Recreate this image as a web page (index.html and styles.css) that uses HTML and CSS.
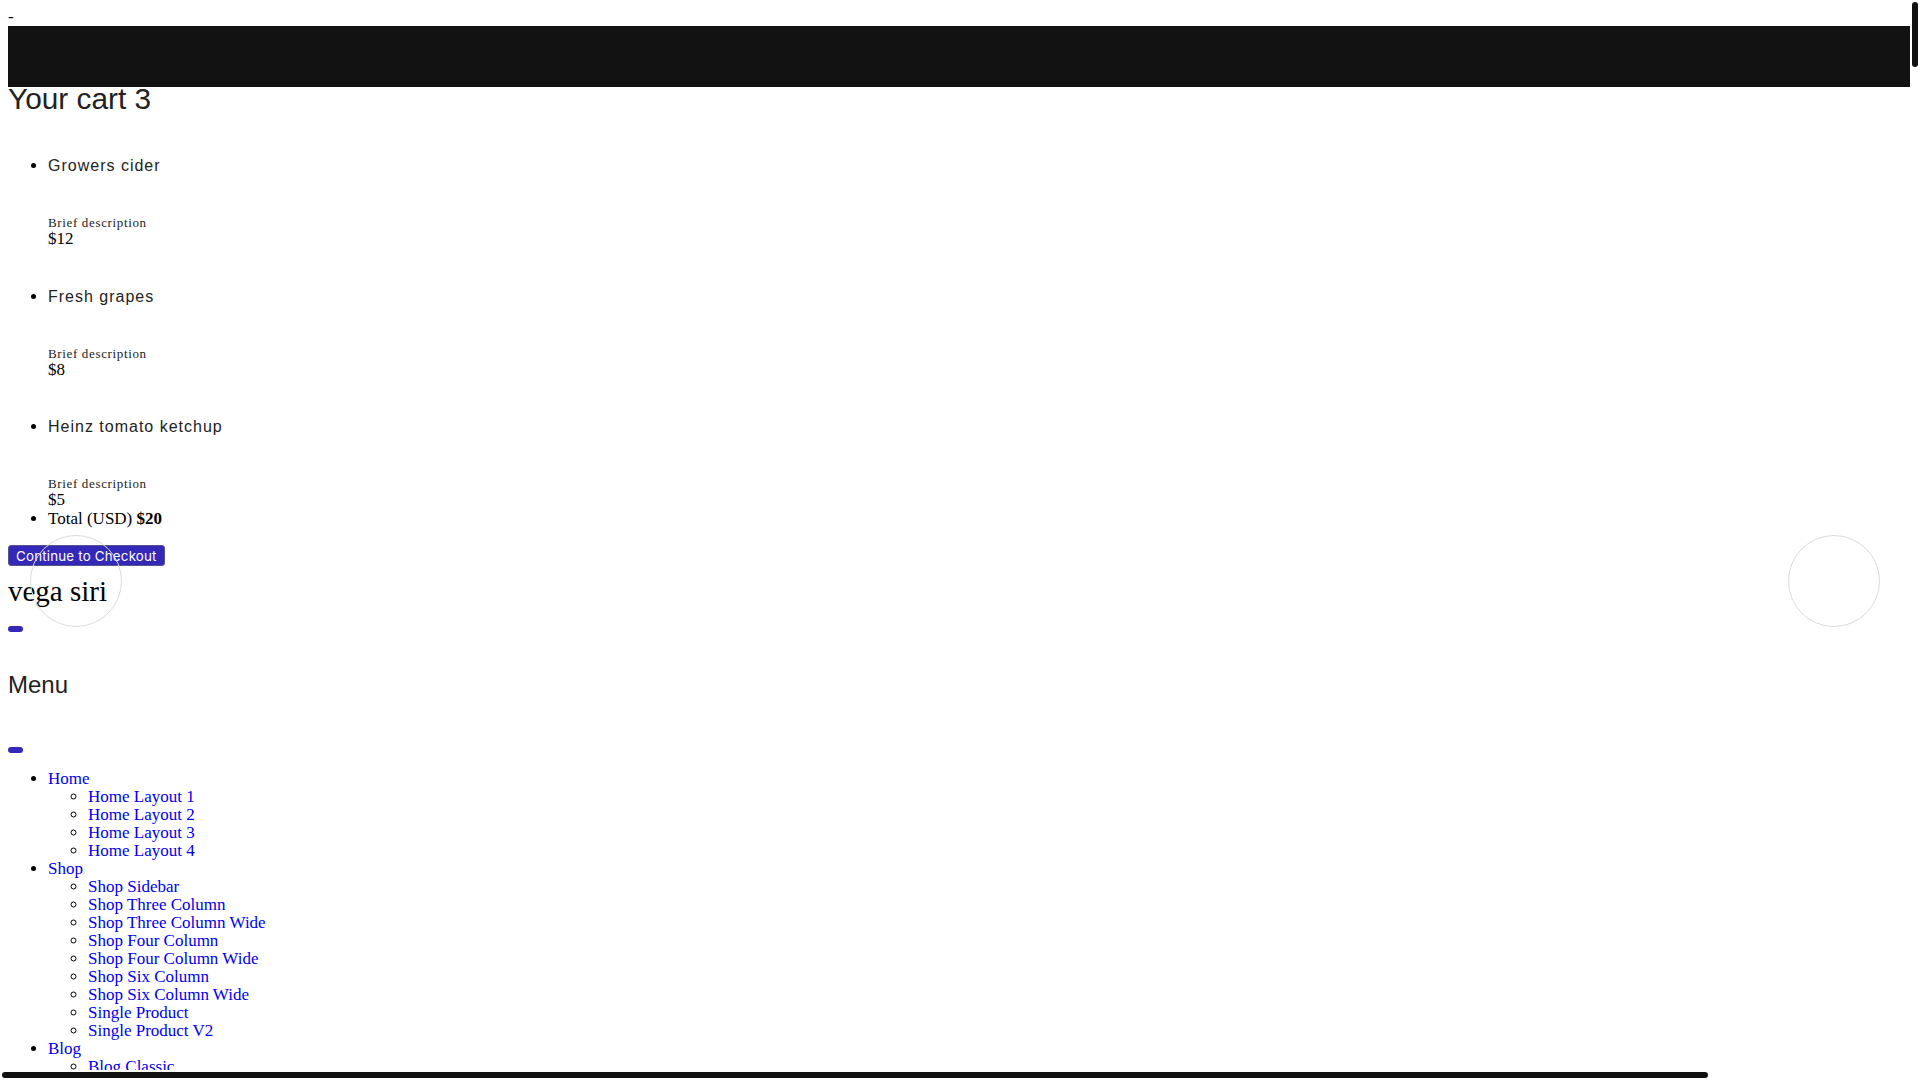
FILE: index.html
```html
<!DOCTYPE html>
<html lang="en">
<head>
<meta charset="utf-8">
<title>vega siri</title>
<link rel="stylesheet" href="styles.css">
</head>
<body>
<div class="page">
  <div class="skip">-</div>
  <div class="topbar"></div>

  <section class="cart">
    <h2 class="cart-title">Your cart 3</h2>
    <ul class="cart-list">
      <li class="cart-item">
        <h4 class="item-name">Growers cider</h4>
        <small class="item-desc">Brief description</small>
        <span class="item-price">$12</span>
      </li>
      <li class="cart-item">
        <h4 class="item-name">Fresh grapes</h4>
        <small class="item-desc">Brief description</small>
        <span class="item-price">$8</span>
      </li>
      <li class="cart-item">
        <h4 class="item-name">Heinz tomato ketchup</h4>
        <small class="item-desc">Brief description</small>
        <span class="item-price">$5</span>
      </li>
      <li class="cart-total">Total (USD) <strong>$20</strong></li>
    </ul>
    <button class="btn-checkout" type="button">Continue to Checkout</button>
  </section>

  <header class="site-header">
    <div class="brand">vega siri</div>
    <button class="pill" type="button" aria-label="Open menu"></button>
    <h3 class="menu-title">Menu</h3>
    <button class="pill pill-close" type="button" aria-label="Close menu"></button>
    <ul class="nav">
      <li><a href="#">Home</a>
        <ul>
          <li><a href="#">Home Layout 1</a></li>
          <li><a href="#">Home Layout 2</a></li>
          <li><a href="#">Home Layout 3</a></li>
          <li><a href="#">Home Layout 4</a></li>
        </ul>
      </li>
      <li><a href="#">Shop</a>
        <ul>
          <li><a href="#">Shop Sidebar</a></li>
          <li><a href="#">Shop Three Column</a></li>
          <li><a href="#">Shop Three Column Wide</a></li>
          <li><a href="#">Shop Four Column</a></li>
          <li><a href="#">Shop Four Column Wide</a></li>
          <li><a href="#">Shop Six Column</a></li>
          <li><a href="#">Shop Six Column Wide</a></li>
          <li><a href="#">Single Product</a></li>
          <li><a href="#">Single Product V2</a></li>
        </ul>
      </li>
      <li><a href="#">Blog</a>
        <ul>
          <li><a href="#">Blog Classic</a></li>
          <li><a href="#">Blog Grid</a></li>
          <li><a href="#">Blog Sidebar</a></li>
          <li><a href="#">Single Post</a></li>
        </ul>
      </li>
      <li><a href="#">Pages</a>
        <ul>
          <li><a href="#">About Us</a></li>
          <li><a href="#">Contact</a></li>
          <li><a href="#">FAQ</a></li>
          <li><a href="#">404</a></li>
        </ul>
      </li>
    </ul>
  </header>

  <button class="circle circle-left" type="button" aria-label="Previous"></button>
  <button class="circle circle-right" type="button" aria-label="Next"></button>
</div>

<div class="scroll-track scroll-track-v" aria-hidden="true"><div class="scroll-thumb thumb-v"></div></div>
<div class="scroll-track scroll-track-h" aria-hidden="true"><div class="scroll-thumb thumb-h"></div></div>
</body>
</html>
```

FILE: styles.css
```css
html {
  background: #fff;
}

body {
  margin: 0;
  font-family: "Liberation Serif", "Times New Roman", serif;
  font-size: 17px;
  color: #000;
}

.page {
  position: relative;
  margin-right: 10px;
  padding: 8px;
}

.skip {
  line-height: 18px;
}

.topbar {
  height: 61px;
  margin-right: -8px;
  background: #121212;
}

/* cart */
.cart-title {
  margin: 0;
  font-family: "Liberation Sans", Arial, sans-serif;
  font-weight: 400;
  font-size: 29.8px;
  line-height: 23px;
  color: #222;
}

.cart-list {
  margin: 46px 0 17px;
  padding-left: 40px;
}

.cart-item + .cart-item {
  margin-top: 38.5px;
}

.item-name {
  margin: 1px 0 40px;
  font-family: "Liberation Sans", Arial, sans-serif;
  font-weight: 400;
  font-size: 16px;
  line-height: 18px;
  letter-spacing: 1px;
  color: #222;
}

.item-desc {
  display: block;
  font-size: 13px;
  line-height: 15px;
  letter-spacing: 0.65px;
  color: #222;
}

.item-price {
  display: block;
  line-height: 18px;
}

.cart-total {
  margin-top: 1px;
  line-height: 18px;
}

.btn-checkout {
  display: block;
  margin: 0;
  padding: 1.5px 7px;
  font-family: Inter, "Liberation Sans", sans-serif;
  font-size: 13.333px;
  letter-spacing: 0.2px;
  color: #fff;
  background: #3328b8;
  border: 1px solid #55558a;
  border-radius: 3px;
}

/* header / menu */
.brand {
  margin-top: 9.3px;
  font-size: 29px;
  line-height: 33.3px;
}

.pill {
  display: block;
  width: 15px;
  height: 6px;
  margin: 17.4px 0 0;
  padding: 0;
  background: #3328b8;
  border: 0;
  border-radius: 3px;
}

.menu-title {
  margin: 39px 0 0;
  font-family: "Liberation Sans", Arial, sans-serif;
  font-weight: 400;
  font-size: 24px;
  line-height: 27.6px;
  color: #222;
}

.pill-close {
  margin-top: 48.5px;
}

.nav {
  margin: 17px 0 16px;
  padding-left: 40px;
  line-height: 18px;
}

.nav ul {
  margin: 0;
  padding-left: 40px;
  list-style-type: circle;
}

.nav a {
  color: #0000ee;
  text-decoration: none;
}

.circle {
  position: absolute;
  top: 535px;
  width: 92px;
  height: 92px;
  padding: 0;
  background: transparent;
  border: 1px solid #dcdcdc;
  border-radius: 50%;
}

.circle-left {
  left: 30px;
}

.circle-right {
  right: 30px;
}

/* scroll indicators */
.scroll-track {
  position: fixed;
  box-sizing: border-box;
  padding: 2px;
  background: #fff;
}

.scroll-track-v {
  top: 0;
  right: 0;
  bottom: 10px;
  width: 10px;
}

.scroll-track-h {
  left: 0;
  right: 10px;
  bottom: 0;
  height: 10px;
}

.scroll-thumb {
  background: #111;
  border-radius: 3px;
}

.thumb-v {
  width: 6px;
  height: 65px;
}

.thumb-h {
  width: 1706px;
  height: 6px;
}
```
